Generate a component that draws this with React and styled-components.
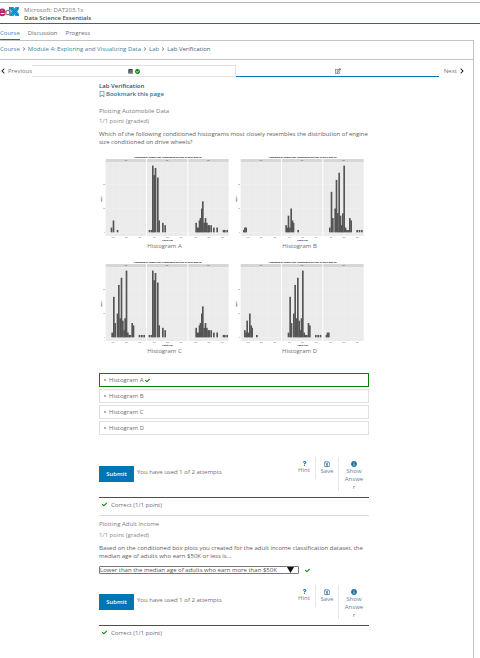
import React from "react";
import styled, { createGlobalStyle } from "styled-components";
import {
  FaBook,
  FaCheck,
  FaCheckCircle,
  FaChevronLeft,
  FaChevronRight,
  FaInfoCircle,
  FaQuestion,
  FaRegBookmark,
  FaRegEdit,
  FaRegSave,
} from "react-icons/fa";

const Global = createGlobalStyle`
  * { box-sizing: border-box; }
  body {
    margin: 0;
    background: #fff;
    color: #6e6e6e;
    font: 6px/8px "Open Sans", "Noto Sans", sans-serif;
  }
  button, select, input { font: inherit; margin: 0; }
  svg { display: block; flex: none; }
`;

const Page = styled.div`
  min-height: 100vh;
  display: flex;
  flex-direction: column;
  padding-top: 2px;
`;

const Header = styled.header`
  height: 22px;
  display: flex;
  align-items: flex-start;
  gap: 5px;
  padding-top: 3px;
  border-top: 1px solid #b4b4b4;
  border-bottom: 1px solid #0075b4;
`;

const CourseName = styled.div`
  color: #4c4c4c;
`;

const Provider = styled.div`
  color: #7a7a7a;
`;

const CourseTitle = styled.div`
  font-weight: 600;
`;

const Tabs = styled.nav`
  height: 16px;
  display: flex;
  gap: 8px;
`;

const Tab = styled.a`
  display: flex;
  align-items: center;
  text-decoration: none;
  color: ${(p) => (p.$active ? "#3c86b4" : "#6a6a6a")};
  border-bottom: 1px solid ${(p) => (p.$active ? "#0075b4" : "transparent")};
  padding-top: 2px;
`;

const Panel = styled.div`
  flex: 1;
  margin-right: 6px;
  border-top: 1px solid #c4c4c4;
  border-right: 1px solid #c4c4c4;
`;

const Crumbs = styled.nav`
  height: 19px;
  display: flex;
  align-items: center;
  gap: 2px;
  padding-bottom: 2px;
  border-bottom: 1px solid #c4c4c4;

  a { color: #3f7f9e; text-decoration: none; }
  span { color: #3b6478; }
`;

const Sequence = styled.div`
  display: flex;
  height: 12px;
  margin-top: 5px;
`;

const StepButton = styled.button`
  display: flex;
  align-items: center;
  justify-content: ${(p) => (p.$end ? "flex-end" : "flex-start")};
  gap: 2px;
  width: ${(p) => (p.$end ? "34px" : "32px")};
  padding: 0 ${(p) => (p.$end ? "8px" : "0")} 0 0;
  border: 0;
  background: none;
  color: #777;

  svg { color: #222; }
`;

const Unit = styled.button`
  flex: 1;
  display: flex;
  align-items: center;
  justify-content: center;
  gap: 2px;
  padding: 0;
  background: #fff;
  color: #444;
  border: 0 solid #e2e2e2;
  border-width: ${(p) => (p.$active ? "0 0 1px" : "1px 1px 1px 0")};
  border-bottom-color: ${(p) => (p.$active ? "#0075b4" : "#e2e2e2")};
`;

const Content = styled.main`
  padding: 5px 104px 0 99px;
`;

const UnitTitle = styled.h1`
  margin: 0;
  font-size: 6px;
  line-height: 8px;
  font-weight: 600;
  color: #4a4a4a;
`;

const Bookmark = styled.button`
  display: flex;
  align-items: center;
  gap: 1px;
  height: 8px;
  padding: 0;
  border: 0;
  background: none;
  color: #2c7295;
  font-weight: 600;
`;

const Problem = styled.section`
  padding-top: ${(p) => (p.$first ? "9px" : "4px")};
`;

const ProblemTitle = styled.h2`
  margin: 0;
  font-size: 6px;
  line-height: 8px;
  font-weight: 400;
  color: #7b7b7b;
`;

const Points = styled.div`
  margin-top: ${(p) => (p.$loose ? "3px" : "2px")};
  color: #888;
`;

const Question = styled.p`
  margin: 5px 0 0;
  color: #606060;
`;

const Charts = styled.div`
  display: grid;
  grid-template-columns: 1fr 1fr;
  row-gap: 9px;
  margin-top: 8px;
`;

const Figure = styled.figure`
  margin: 0;

  svg { width: 100%; height: auto; }
`;

const Caption = styled.figcaption`
  text-align: center;
  padding-right: 4px;
`;

const Choices = styled.fieldset`
  display: grid;
  gap: 2px;
  margin: 18px 0 0;
  padding: 0;
  border: 0;
`;

const Choice = styled.label`
  display: flex;
  align-items: center;
  gap: 3px;
  height: 14px;
  padding-left: 4px;
  border: 1px solid ${(p) => (p.$correct ? "#008100" : "#e0e0e0")};

  svg { color: #008100; margin-left: -2px; }
`;

const Radio = styled.input`
  appearance: none;
  width: 2px;
  height: 2px;
  border-radius: 1px;
  background: #999;
`;

const Actions = styled.div`
  display: flex;
  justify-content: space-between;
  padding-top: ${(p) => (p.$wide ? "22px" : "11px")};
`;

const SubmitGroup = styled.div`
  display: flex;
  align-items: center;
  gap: 3px;
  height: 16px;
  margin-top: 9px;
`;

const Submit = styled.button`
  width: 35px;
  height: 16px;
  padding: 0;
  border: 0;
  background: #0075b4;
  color: #fff;
  font-weight: 600;
`;

const Attempts = styled.span`
  padding-bottom: 4px;
`;

const Tools = styled.div`
  display: flex;
  align-items: flex-start;
`;

const Tool = styled.button`
  display: flex;
  flex-direction: column;
  align-items: center;
  width: ${(p) => (p.$wide ? "31px" : "23px")};
  min-height: 22px;
  padding: 4px ${(p) => (p.$wide ? "5px" : "2px")} 0;
  border: 0;
  border-left: 1px solid ${(p) => (p.$first ? "transparent" : "#e6e6e6")};
  background: none;
  color: #5a86a0;

  svg { color: #1c6f9e; }
  span { max-width: 20px; overflow-wrap: anywhere; }
`;

const Result = styled.div`
  display: flex;
  align-items: center;
  gap: 4px;
  height: 19px;
  padding: 0 0 4px 3px;
  border-top: 1px solid #008100;
  border-bottom: 1px solid ${(p) => (p.$last ? "transparent" : "#dcdcdc")};
  margin-top: 6px;

  svg { color: #008100; }
`;

const Answer = styled.div`
  display: flex;
  align-items: center;
  gap: 6px;
  margin-top: 6px;

  > svg { color: #008100; }
`;

const SelectWrap = styled.div`
  position: relative;
  width: 200px;

  svg { position: absolute; right: 5px; top: 0; pointer-events: none; }
`;

const Select = styled.select`
  appearance: none;
  display: block;
  width: 100%;
  height: 8px;
  padding: 0;
  border: 1px solid #777;
  border-radius: 1px;
  background: #fff;
  color: #555;
  line-height: 6px;
`;

const small = [[15, 2], [21, 5], [33, 1]];
const fwd = [[5, 1], [11, 1], [15, 28], [19, 24], [23, 27], [30, 23], [34, 5], [45, 4], [52, 3]];
const rwd = [
  [21, 4], [24, 2], [28, 2], [31, 5], [34, 6], [38, 10], [41, 13], [45, 4], [49, 6],
  [53, 4], [57, 3], [60, 3], [66, 3], [74, 2], [84, 2], [103, 1], [107, 1], [114, 1],
];
const tiny = [[7, 1], [10, 2], [14, 2]];
const mid = [[10, 3], [14, 2], [17, 7], [21, 2], [25, 10], [29, 5], [32, 4], [46, 1]];
const big = [
  [17, 2], [22, 17], [26, 6], [33, 10], [37, 22], [41, 8], [45, 25], [49, 7], [53, 3],
  [56, 8], [60, 28], [64, 2], [68, 1], [72, 1], [77, 6], [81, 5], [99, 1], [106, 1], [113, 1],
];

const charts = [
  ["A", [small, fwd, rwd]],
  ["B", [tiny, mid, big]],
  ["C", [big, fwd, rwd]],
  ["D", [mid, big, tiny]],
];

const BASE = 235;
const UNIT = 7.15;

function Histogram({ panels }) {
  return (
    <svg viewBox="0 0 405 264" fontFamily="Liberation Sans, sans-serif" fill="#555">
      <text x="206" y="11" fontSize="7" fontWeight="bold" textAnchor="middle" fill="#000">
        Histogram of engine-size conditioned on type of drive wheels
      </text>
      {panels.map((bars, i) => {
        const x = 20 + i * 124;
        return (
          <g key={i}>
            <rect x={x} y="15" width="121" height="10" fill="#d6d6d6" />
            <rect x={x} y="25" width="121" height="221" fill="#ebebeb" />
            {[BASE, BASE - 71, BASE - 143].map((y) => (
              <rect key={y} x={x} y={y} width="121" height="1" fill="#f8f8f8" />
            ))}
            {[22, 42, 62, 82, 102].map((g) => (
              <rect key={g} x={x + g} y="25" width="1" height="221" fill="#f2f2f2" />
            ))}
            {bars.map(([bx, n]) => (
              <rect key={bx} x={x + bx} y={BASE - n * UNIT} width="5" height={n * UNIT} fill="#555" />
            ))}
            <text x={x + 60} y="22" fontSize="5" textAnchor="middle">{["4wd", "fwd", "rwd"][i]}</text>
            {[100, 200, 300].map((t, k) => (
              <text key={t} x={x + 22 + k * 40} y="253" fontSize="5" textAnchor="middle">{t}</text>
            ))}
          </g>
        );
      })}
      {[0, 10, 20].map((t) => (
        <text key={t} x="18" y={BASE + 2 - t * UNIT} fontSize="5" textAnchor="end">{t}</text>
      ))}
      <text x="206" y="260" fontSize="6" fontWeight="bold" textAnchor="middle" fill="#111">engine.size</text>
      <text transform="translate(10 136) rotate(-90)" fontSize="6" fontWeight="bold" textAnchor="middle" fill="#111">count</text>
    </svg>
  );
}

function Logo() {
  return (
    <svg width="19" height="11" viewBox="0 0 19 11" role="img" aria-label="edX">
      <path d="M10 1H13.500L14.500 2.500L15.500 1H19V3L17.300 5.500L19 8V10H15.500L14.500 8.500L13.500 10H10V8L11.700 5.500L10 3Z" fill="#12a0dc" />
      <path d="M11 2L18 9M18 2L11 9" stroke="#0b7fb8" strokeWidth="1" />
      <path d="M9.700 1V9.500" stroke="#6b6f76" strokeWidth="1.400" />
      <circle cx="8" cy="6.500" r="2.200" fill="none" stroke="#8a8086" strokeWidth="1.300" />
      <path d="M0 6H4.500C4.500 3 0.500 2.500 -0.500 5.500C-1 9.500 3 10 5 8" fill="none" stroke="#b7246f" strokeWidth="1.900" />
    </svg>
  );
}

function ProblemFooter({ wide, last }) {
  return (
    <>
      <Actions $wide={wide}>
        <SubmitGroup>
          <Submit>Submit</Submit>
          <Attempts>You have used 1 of 2 attempts</Attempts>
        </SubmitGroup>
        <Tools>
          <Tool $first><FaQuestion size={5} /><span>Hint</span></Tool>
          <Tool><FaRegSave size={6} /><span>Save</span></Tool>
          <Tool $wide><FaInfoCircle size={6} /><span>Show Answer</span></Tool>
        </Tools>
      </Actions>
      <Result $last={last}><FaCheck size={5} />Correct (1/1 point)</Result>
    </>
  );
}

export default function App() {
  return (
    <Page>
      <Global />
      <Header>
        <Logo />
        <CourseName>
          <Provider>Microsoft: DAT203.1x</Provider>
          <CourseTitle>Data Science Essentials</CourseTitle>
        </CourseName>
      </Header>
      <Tabs>
        <Tab href="#course" $active>Course</Tab>
        <Tab href="#discussion">Discussion</Tab>
        <Tab href="#progress">Progress</Tab>
      </Tabs>
      <Panel>
        <Crumbs>
          <a href="#course">Course</a>
          <FaChevronRight size={4} />
          <a href="#module">Module 4: Exploring and Visualizing Data</a>
          <FaChevronRight size={4} />
          <a href="#lab">Lab</a>
          <FaChevronRight size={4} />
          <span>Lab Verification</span>
        </Crumbs>
        <Sequence>
          <StepButton><FaChevronLeft size={6} />Previous</StepButton>
          <Unit aria-label="Lab"><FaBook size={5} /><FaCheckCircle size={5} color="#008100" /></Unit>
          <Unit $active aria-label="Lab Verification"><FaRegEdit size={6} /></Unit>
          <StepButton $end>Next<FaChevronRight size={6} /></StepButton>
        </Sequence>
        <Content>
          <UnitTitle>Lab Verification</UnitTitle>
          <Bookmark><FaRegBookmark size={6} />Bookmark this page</Bookmark>
          <Problem $first>
            <ProblemTitle>Plotting Automobile Data</ProblemTitle>
            <Points>1/1 point (graded)</Points>
            <Question>
              Which of the following conditioned histograms most closely resembles the distribution of engine size conditioned on drive wheels?
            </Question>
            <Charts>
              {charts.map(([name, panels]) => (
                <Figure key={name}>
                  <Histogram panels={panels} />
                  <Caption>Histogram {name}</Caption>
                </Figure>
              ))}
            </Charts>
            <Choices aria-label="Histogram">
              {charts.map(([name]) => (
                <Choice key={name} $correct={name === "A"}>
                  <Radio type="radio" name="histogram" defaultChecked={name === "A"} />
                  Histogram {name}
                  {name === "A" && <FaCheck size={5} />}
                </Choice>
              ))}
            </Choices>
            <ProblemFooter wide />
          </Problem>
          <Problem>
            <ProblemTitle>Plotting Adult Income</ProblemTitle>
            <Points $loose>1/1 point (graded)</Points>
            <Question id="income-question">
              Based on the conditioned box plots you created for the adult income classification dataset, the median age of adults who earn $50K or less is...
            </Question>
            <Answer>
              <SelectWrap>
                <Select aria-labelledby="income-question">
                  <option>Lower than the median age of adults who earn more than $50K</option>
                </Select>
                <svg width="7" height="8" viewBox="0 0 7 8"><path d="M0 1H7L3.500 7Z" fill="#111" /></svg>
              </SelectWrap>
              <FaCheck size={5} />
            </Answer>
            <ProblemFooter last />
          </Problem>
        </Content>
      </Panel>
    </Page>
  );
}
